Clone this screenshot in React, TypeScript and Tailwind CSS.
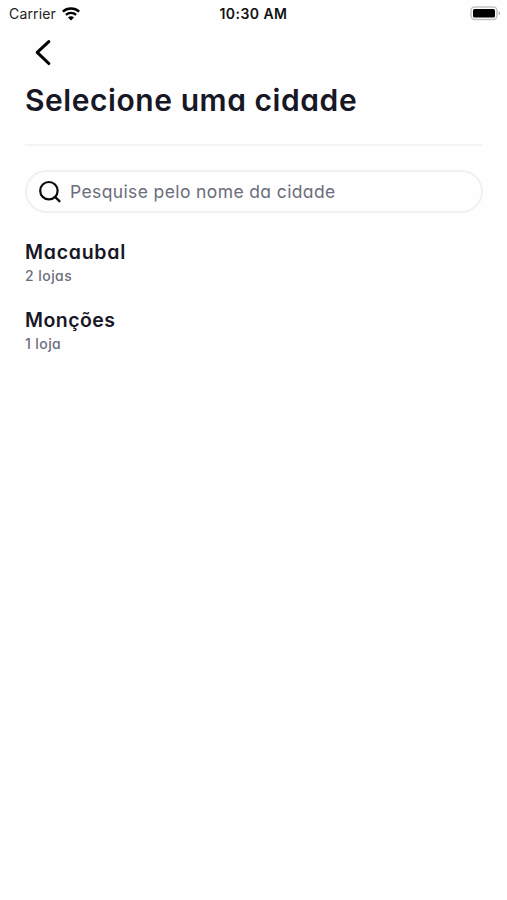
type City = {
  name: string;
  stores: string;
  nameClass: string;
  storesClass: string;
};

const cities: City[] = [
  {
    name: "Macaubal",
    stores: "2 lojas",
    nameClass: "tracking-[0.75px]",
    storesClass: "tracking-[0.45px]",
  },
  {
    name: "Monções",
    stores: "1 loja",
    nameClass: "tracking-[0.45px]",
    storesClass: "tracking-[0.4px]",
  },
];

function WifiIcon() {
  return (
    <svg className="h-[14px] w-[18px]" viewBox="0 0 18 14" fill="none">
      <path d="M.8 4.6C5.2.5 12.8.5 17.2 4.6" stroke="#000" strokeWidth="2.5" />
      <path d="M3.9 7.9c2.8-2.6 7.4-2.6 10.2 0" stroke="#000" strokeWidth="2.3" />
      <path d="M9 13.4 6 10.5c1.6-1.6 4.4-1.6 6 0L9 13.4Z" fill="#000" />
    </svg>
  );
}

function BatteryIcon() {
  return (
    <svg className="h-[15px] w-[31px]" viewBox="0 0 31 15" fill="none">
      <rect x="1" y="1" width="26" height="12.5" rx="3.8" stroke="#c2c2c2" strokeWidth="1.5" />
      <rect x="3" y="3" width="22" height="8.6" rx="1.6" fill="#000" />
      <path d="M28.7 5.2c1.9.7 1.9 3.4 0 4.1V5.2Z" fill="#aaa" />
    </svg>
  );
}

function StatusBar() {
  return (
    <header className="grid h-[27px] grid-cols-[1fr_auto_1fr] items-center pr-[6px] pl-[6px] text-black">
      <div className="flex items-center gap-[6px] pl-[3px]">
        <span className="text-[14px] tracking-[0.15px] text-[#222]">Carrier</span>
        <WifiIcon />
      </div>
      <span className="text-center text-[14px] font-semibold tracking-[0.45px] whitespace-nowrap text-[#111]">
        10:30 AM
      </span>
      <div className="flex justify-end">
        <BatteryIcon />
      </div>
    </header>
  );
}

export default function App() {
  return (
    <div className="min-h-[900px] w-full bg-[#fefefe] font-['Inter','Noto_Sans',sans-serif] text-[#171725]">
      <StatusBar />
      <main className="px-[25px] [font-feature-settings:'cv11']">
        <button aria-label="Voltar" className="mt-[10px] ml-[9px] block h-[30px] w-[18px]">
          <svg className="h-[30px] w-[18px]" viewBox="0 0 18 30" fill="none">
            <path
              d="M14.8 4.6 3.2 15.3 14.8 26.5"
              stroke="#000"
              strokeWidth="3.1"
              strokeLinecap="round"
              strokeLinejoin="round"
            />
          </svg>
        </button>
        <h1 className="mt-[12px] h-[42px] text-[30px] leading-[42px] font-semibold tracking-[0.56px] whitespace-nowrap">
          Selecione uma cidade
        </h1>
        <hr className="mt-[23px] border-t-2 border-[#f3f4f4]" />
        <label className="mt-[24px] mr-[-1px] flex h-[43px] items-center rounded-full border-2 border-[#f0f1f1] pl-[12px]">
          <svg className="h-[23px] w-[23px] shrink-0" viewBox="0 0 23 23" fill="none">
            <circle cx="9.9" cy="10.7" r="8.7" stroke="#0b0b0d" strokeWidth="2.2" />
            <path d="m16.2 17 4.2 4.2" stroke="#0b0b0d" strokeWidth="2.4" strokeLinecap="round" />
          </svg>
          <input
            className="ml-[8px] min-w-0 flex-1 bg-transparent pt-[2px] text-[17.5px] tracking-[0.38px] outline-none placeholder:text-[#6b6d7b]"
            placeholder="Pesquise pelo nome da cidade"
          />
        </label>
        <ul className="mt-[25px] flex flex-col gap-[18px]">
          {cities.map((city) => (
            <li key={city.name} className="h-[50px]">
              <h2 className={`text-[19.5px] leading-[29px] font-semibold ${city.nameClass}`}>
                {city.name}
              </h2>
              <p className={`text-[14px] leading-[17px] font-medium text-[#6b6e7d] ${city.storesClass}`}>
                {city.stores}
              </p>
            </li>
          ))}
        </ul>
      </main>
    </div>
  );
}
